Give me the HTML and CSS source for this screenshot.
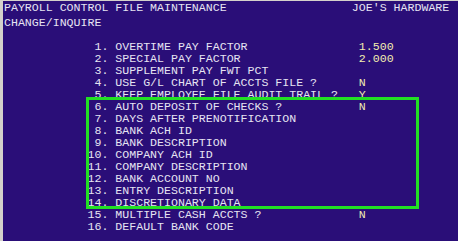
FILE: index.html
```html
<!DOCTYPE html>
<html lang="en">
<head>
  <meta charset="UTF-8">
  <meta name="viewport" content="width=device-width, initial-scale=1.0">
  <title>Payroll Control File Maintenance</title>
  <link rel="stylesheet" href="styles.css">
</head>
<body>
  <div class="screen">
    <div class="head">
      <pre class="line">PAYROLL CONTROL FILE MAINTENANCE                  JOE'S HARDWARE</pre>
      <pre class="line">CHANGE/INQUIRE</pre>
    </div>
    <div class="menu">
      <pre class="line">             1. OVERTIME PAY FACTOR                <span class="val">1.500</span></pre>
      <pre class="line">             2. SPECIAL PAY FACTOR                 <span class="val">2.000</span></pre>
      <pre class="line">             3. SUPPLEMENT PAY FWT PCT</pre>
      <pre class="line">             4. USE G/L CHART OF ACCTS FILE ?      <span class="val">N</span></pre>
      <pre class="line">             5. KEEP EMPLOYEE FILE AUDIT TRAIL ?   <span class="val">Y</span></pre>
      <pre class="line">             6. AUTO DEPOSIT OF CHECKS ?           <span class="val">N</span></pre>
      <pre class="line">             7. DAYS AFTER PRENOTIFICATION</pre>
      <pre class="line">             8. BANK ACH ID</pre>
      <pre class="line">             9. BANK DESCRIPTION</pre>
      <pre class="line">            10. COMPANY ACH ID</pre>
      <pre class="line">            11. COMPANY DESCRIPTION</pre>
      <pre class="line">            12. BANK ACCOUNT NO</pre>
      <pre class="line">            13. ENTRY DESCRIPTION</pre>
      <pre class="line">            14. DISCRETIONARY DATA</pre>
      <pre class="line">            15. MULTIPLE CASH ACCTS ?              <span class="val">N</span></pre>
      <pre class="line">            16. DEFAULT BANK CODE</pre>
      <div class="highlight"></div>
    </div>
  </div>
</body>
</html>
```

FILE: styles.css
```css
body {
  margin: 0;
  background: #d4d1cb;
  height: 241px;
  overflow: hidden;
}
.screen {
  margin: 1px 0 0 3px;
  height: 240px;
  background: #2a0e78;
  color: #e6e4f2;
  font-family: "Liberation Mono", monospace;
  font-size: 11.6px;
  padding-left: 1px;
  position: relative;
}
.line {
  margin: 0;
  height: 12px;
  line-height: 12px;
  font: inherit;
  white-space: pre;
}
.head .line {
  height: 15px;
}
.menu {
  padding-top: 9px;
}
.val {
  color: #f2ecb0;
}
.highlight {
  position: absolute;
  left: 83px;
  top: 96px;
  width: 327px;
  height: 106px;
  border: 3px solid #22e024;
}
```
